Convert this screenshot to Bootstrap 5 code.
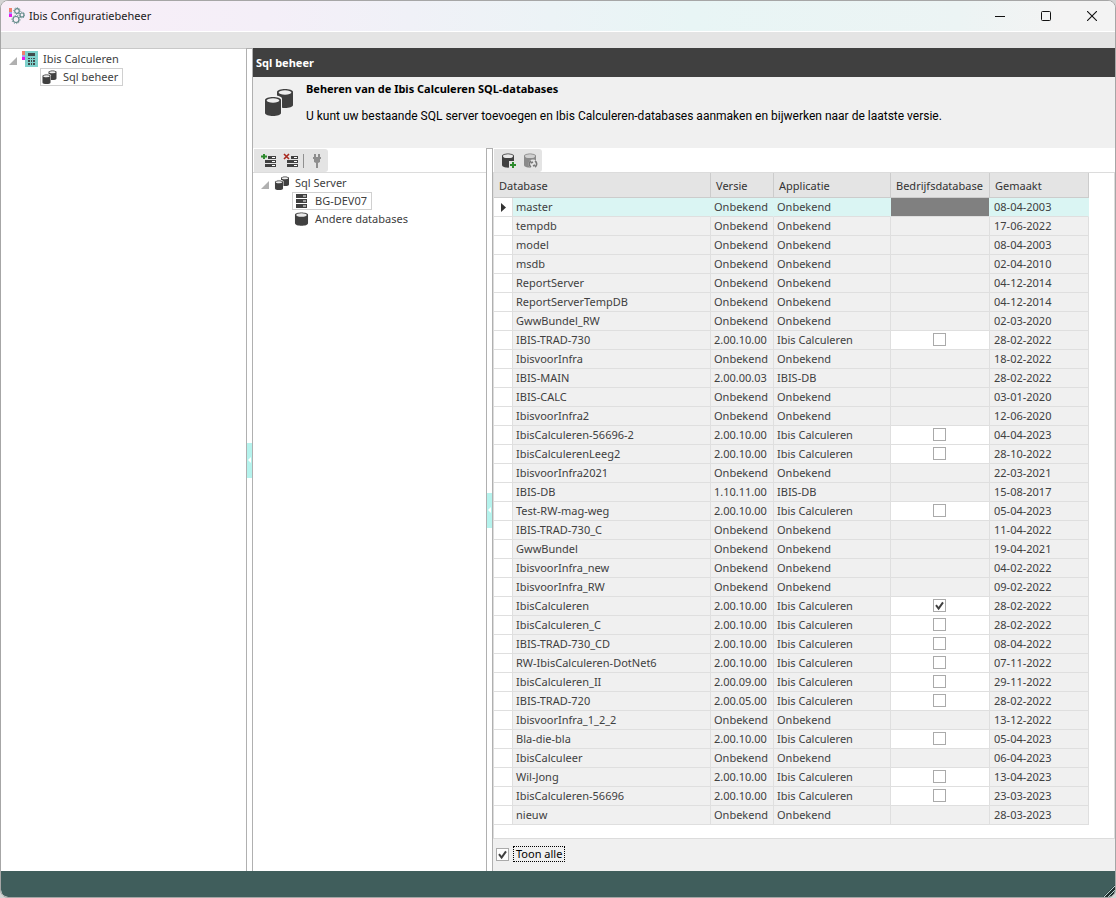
<!DOCTYPE html>
<html lang="nl">
<head>
<meta charset="utf-8">
<meta name="viewport" content="width=device-width, initial-scale=1">
<title>Ibis Configuratiebeheer</title>
<link href="https://cdn.jsdelivr.net/npm/bootstrap@5.3.0/dist/css/bootstrap.min.css" rel="stylesheet">
<style>
  body { font-family: "Noto Sans", "Open Sans", sans-serif; font-size: 11px; line-height: 18px; color: #404040; background: #d4d4d4; }
  .app-window { border: 1px solid #a6a6a6; border-radius: 8px; background: #fff; color: #404040; }
  .title-bar { height: 31px; padding: 0 0 1px 8px; color: #1a1a1a; background: linear-gradient(90deg, #f9eef8 0%, #f4eff8 24%, #e8f5f5 62%, #ecf4f4 86%, #f3f3f3 95%); border-bottom: 1px solid #fff; }
  .caption-btn { width: 46px; height: 28px; padding: 0; border: 0; background: none; color: #111; display: flex; align-items: center; justify-content: center; }
  .menu-strip { height: 16px; background: #e4e4e4; }
  .nav-pane { width: 245px; border-top: 1px solid #c8c8c8; }
  .server-pane { width: 233px; }
  .splitter { width: 7px; border: 1px solid #b0b0b0; border-width: 1px 1px 0; background: #fff; display: flex; flex-direction: column; justify-content: center; }
  .splitter-grip { height: 35px; background: #b5f3ed; display: flex; align-items: center; justify-content: center; }
  .pane-heading { height: 29px; line-height: 30px; padding-left: 3px; margin: 0; font-size: 11px; font-weight: 700; color: #fff; background: #404040; }
  .intro { height: 71px; padding: 3px 0 0 11px; background: #f0f0f0; color: #000; }
  .intro h2 { font-size: 11px; line-height: 18px; margin: 0 0 9px; font-weight: 700; }
  .intro p { font-family: Roboto, "Noto Sans", sans-serif; font-size: 12px; line-height: 18px; margin: 0; }
  .tool-row { height: 25px; padding: 1px 0 0 1px; border-bottom: 1px solid #dcdcdc; }
  .tool-strip { height: 23px; background: #e4e4e4; border-radius: 0 3px 3px 0; display: inline-flex; align-items: center; }
  .tool-strip button { width: 22px; height: 22px; padding: 0; border: 0; background: none; display: flex; align-items: center; justify-content: center; }
  .tool-sep { width: 1px; height: 14px; margin: 0 2px 0 1px; background: #909090; }
  .tree { list-style: none; margin: 0; padding: 0; }
  .nav-pane > .tree { padding-top: 1px; }
  .server-pane > .tree { padding-top: 1px; }
  .tree a { display: inline-flex; align-items: center; gap: 6px; height: 18px; padding: 0 4px 0 1px; border: 1px solid transparent; color: #404040; text-decoration: none; white-space: nowrap; }
  .tree a.chosen { border-color: #d0d0d0; }
  .tree-root { display: flex; align-items: center; height: 18px; }
  .tree-root svg:first-child { margin-right: 3px; }
  .tree-root a { gap: 4px; }
  .tree-root a svg:first-child { margin-right: 1px; }
  .tree-leaf { display: flex; height: 18px; padding-left: 39px; }
  .grid-area { border-right: 1px solid #dcdcdc; border-left: 1px solid #dcdcdc; border-bottom: 1px solid #dcdcdc; }
  .db-grid { table-layout: fixed; width: 595px; border-collapse: separate; border-spacing: 0; line-height: 18px; }
  .db-grid th { height: 25px; padding: 1px 5px 0; font-weight: 400; color: #333; background: #e4e4e4; border-right: 1px solid #ccc; border-bottom: 1px solid #ccc; white-space: nowrap; }
  .db-grid td { height: 19px; padding: 0 3px; background: #f0f0f0; border-right: 1px solid #dfdfdf; border-bottom: 1px solid #dfdfdf; white-space: nowrap; }
  .db-grid td:nth-child(6) { padding-left: 4px; }
  .db-grid td:first-child, .db-grid td.editable { background: #fff; }
  .db-grid td.editable { padding: 0 4px 1px 3px; }
  .db-grid tr.current td:not(:first-child) { background: #daf5f3; border-right-color: #daf5f3; }
  .db-grid tr.current td.blocked { background: #808080; border-right-color: #daf5f3; }
  .tick { appearance: none; display: block; width: 13px; height: 13px; margin: 0; border: 1px solid #aaa; border-radius: 0; background: #fff center / 11px 11px no-repeat; }
  .tick:checked { background-image: url("data:image/svg+xml,%3Csvg xmlns='http://www.w3.org/2000/svg' viewBox='0 0 11 11'%3E%3Cpath d='M2 5.2 4.6 8.5 9 2.4' fill='none' stroke='%23404040' stroke-width='2'/%3E%3C/svg%3E"); }
  .grid-footer { height: 32px; padding: 0 0 2px 3px; background: #f0f0f0; }
  .grid-footer label { margin-left: 4px; padding: 0 2px; line-height: 14px; border: 1px dotted #000; color: #000; }
  .status-strip { height: 26px; background: #405e5c; border-radius: 0 0 7px 7px; overflow: hidden; }
</style>
</head>
<body>
<svg class="d-none" xmlns="http://www.w3.org/2000/svg">
  <symbol id="cylinder" viewBox="0 0 14 15">
    <path d="M0 3C0-.4 14-.4 14 3v9c0 3.6-14 3.6-14 0z" fill="#404040"/>
    <ellipse cx="7" cy="3.2" rx="5.6" ry="1.9" fill="#e9e9e9"/>
  </symbol>
  <symbol id="cylinders" viewBox="0 0 30 30">
    <path d="M13 4C13 0 29 0 29 4v13c0 4-16 4-16 0z" fill="#404040"/>
    <ellipse cx="21" cy="4.500" rx="6.400" ry="2.200" fill="#efefef"/>
    <path d="M0 11c0-5 18-5 18 0v16H0z" fill="#f4f4f4"/>
    <path d="M1 12c0-4 16-4 16 0v13c0 4-16 4-16 0z" fill="#404040"/>
    <ellipse cx="9" cy="12.500" rx="6.400" ry="2.200" fill="#efefef"/>
  </symbol>
  <symbol id="rack" viewBox="0 0 11 14">
    <path d="M0 0h11v4H0zM0 5h11v4H0zM0 10h11v4H0z" fill="#404040"/>
    <path d="M7 2h3M7 7h3M7 12h3" stroke="#fff" stroke-width="1"/>
  </symbol>
  <symbol id="expanded" viewBox="0 0 8 8"><path d="M8 0v8H0z" fill="#b0b0b0"/></symbol>
</svg>

<div class="app-window d-flex flex-column min-vh-100 overflow-hidden">
  <header class="title-bar d-flex align-items-center">
    <svg width="16" height="18" viewBox="0 0 16 18">
      <path d="M0 1h3v4H0z" fill="#f0806c"/><path d="M0 5h3v2H0z" fill="#a9a0ee"/><path d="M0 7h3v3H0z" fill="#e815ee"/>
      <g fill="none" stroke="#5f8987" stroke-width="1.200">
        <circle cx="8" cy="4" r="2.300"/><circle cx="13" cy="8" r="2"/><circle cx="7" cy="12.500" r="3"/>
      </g>
      <g fill="none" stroke="#5f8987" stroke-width="1" stroke-dasharray="1 1.500">
        <circle cx="8" cy="4" r="3.300"/><circle cx="13" cy="8" r="2.900"/><circle cx="7" cy="12.500" r="4.100"/>
      </g>
    </svg>
    <span class="ms-1">Ibis Configuratiebeheer</span>
    <div class="ms-auto d-flex">
      <button class="caption-btn" type="button" aria-label="Minimaliseren"><svg width="10" height="10"><path d="M0 5.500h10" stroke="currentColor"/></svg></button>
      <button class="caption-btn" type="button" aria-label="Maximaliseren"><svg width="10" height="10"><rect x=".5" y=".5" width="9" height="9" rx="1" fill="none" stroke="currentColor"/></svg></button>
      <button class="caption-btn" type="button" aria-label="Sluiten"><svg width="10" height="10"><path d="m0 0 10 10M10 0 0 10" stroke="currentColor" stroke-width="1.100"/></svg></button>
    </div>
  </header>
  <div class="menu-strip"></div>

  <div class="d-flex flex-grow-1">
    <nav class="nav-pane flex-shrink-0">
      <ul class="tree">
        <li>
          <div class="tree-root ps-2">
            <svg class="mt-1" width="8" height="8"><use href="#expanded"/></svg>
            <a href="#"><svg width="16" height="16" viewBox="0 0 16 16">
              <path d="M3 0h13v16H3z" fill="#7fd1cc"/><path d="M0 0h3v4H0z" fill="#f0806c"/><path d="M0 4h3v2H0z" fill="#a9a0ee"/><path d="M0 6h3v3H0z" fill="#e815ee"/>
              <path d="M6 2h7v3H6zM6 7h2v1H6zM9 7h1v1H9zM11 7h2v1h-2zM6 9h2v2H6zM9 9h1v2H9zM11 9h2v2h-2zM6 12h2v2H6zM9 12h1v2H9zM11 12h2v2h-2z" fill="#404b4b"/>
            </svg>Ibis Calculeren</a>
          </div>
          <ul class="tree">
            <li class="tree-leaf"><a class="chosen" href="#"><svg width="15" height="15"><use href="#cylinders"/></svg>Sql beheer</a></li>
          </ul>
        </li>
      </ul>
    </nav>
    <div class="splitter flex-shrink-0"><div class="splitter-grip"><svg width="3" height="6"><path d="M3 0v6L0 3z" fill="#fff"/></svg></div></div>

    <main class="d-flex flex-column flex-grow-1">
      <h1 class="pane-heading">Sql beheer</h1>
      <section class="intro d-flex">
        <svg class="mt-2 me-2 flex-shrink-0" width="30" height="30"><use href="#cylinders"/></svg>
        <div class="ps-1 ms-0">
          <h2>Beheren van de Ibis Calculeren SQL-databases</h2>
          <p>U kunt uw bestaande SQL server toevoegen en Ibis Calculeren-databases aanmaken en bijwerken naar de laatste versie.</p>
        </div>
      </section>

      <div class="d-flex flex-grow-1">
        <section class="server-pane flex-shrink-0">
          <div class="tool-row">
            <div class="tool-strip ps-1">
              <button type="button" aria-label="Server toevoegen"><svg width="16" height="16" viewBox="0 0 16 16"><path d="M4 3h11v3H4zM4 7h11v3H4zM4 11h11v3H4z" fill="#404040"/><path d="M11 4.500h3M11 8.500h3M11 12.500h3" stroke="#fff"/><path d="M0 0h7v7H0z" fill="#e4e4e4"/><path d="M3 1v5M0 3.500h6" stroke="#2c8a2c" stroke-width="2"/></svg></button>
              <button type="button" aria-label="Server verwijderen"><svg width="16" height="16" viewBox="0 0 16 16"><path d="M4 3h11v3H4zM4 7h11v3H4zM4 11h11v3H4z" fill="#404040"/><path d="M11 4.500h3M11 8.500h3M11 12.500h3" stroke="#fff"/><path d="M0 0h8v7H0z" fill="#e4e4e4"/><path d="m1 1 5 5M6 1 1 6" stroke="#a8281e" stroke-width="1.600"/></svg></button>
              <span class="tool-sep"></span>
              <button type="button" aria-label="Verbinden" disabled><svg width="10" height="14" viewBox="0 0 10 14"><path d="M2 0h2v3h2V0h2v3h1v2H8v3L6 9v5H4V9L2 8V5H1V3h1z" fill="#8e8e8e"/></svg></button>
            </div>
          </div>
          <ul class="tree">
            <li>
              <div class="tree-root ps-2">
                <svg class="mt-1" width="8" height="8"><use href="#expanded"/></svg>
                <a href="#"><svg width="16" height="15"><use href="#cylinders"/></svg>Sql Server</a>
              </div>
              <ul class="tree">
                <li class="tree-leaf"><a class="chosen" href="#"><svg width="15" height="14"><use href="#rack"/></svg>BG-DEV07</a></li>
                <li class="tree-leaf"><a href="#"><svg width="15" height="14"><use href="#cylinder"/></svg>Andere databases</a></li>
              </ul>
            </li>
          </ul>
        </section>
        <div class="splitter flex-shrink-0"><div class="splitter-grip"><svg width="3" height="6"><path d="M3 0v6L0 3z" fill="#fff"/></svg></div></div>

        <section class="d-flex flex-column flex-grow-1">
          <div class="tool-row">
            <div class="tool-strip ps-1">
              <button type="button" aria-label="Database aanmaken"><svg width="16" height="16" viewBox="0 0 16 16"><path d="M1 3c0-3.500 12-3.500 12 0v9c0 3.500-12 3.500-12 0z" fill="#404040"/><ellipse cx="7" cy="3.200" rx="5" ry="1.900" fill="#e9e9e9"/><path d="M8 8h8v8H8z" fill="#e4e4e4"/><path d="M12 9v6M9 12h6" stroke="#2c8a2c" stroke-width="2"/></svg></button>
              <button type="button" aria-label="Database bijwerken" disabled><svg width="16" height="16" viewBox="0 0 16 16"><path d="M1 3c0-3.500 12-3.500 12 0v9c0 3.500-12 3.500-12 0z" fill="#8a8a8a"/><ellipse cx="7" cy="3.200" rx="5" ry="1.900" fill="#d0d0d0"/><circle cx="10" cy="11" r="4.500" fill="#e4e4e4"/><path d="M8 14a3.500 3.500 0 0 1 0-6M12 8a3.500 3.500 0 0 1 0 6M8 10l2-1M12 12l-2 1" fill="none" stroke="#777" stroke-width="1.600"/></svg></button>
            </div>
          </div>
          <div class="grid-area flex-grow-1">
            <table class="db-grid">
              <colgroup><col style="width:19px"><col style="width:198px"><col style="width:63px"><col style="width:117px"><col style="width:99px"><col style="width:99px"></colgroup>
              <thead>
                <tr><th colspan="2">Database</th><th>Versie</th><th>Applicatie</th><th>Bedrijfsdatabase</th><th>Gemaakt</th></tr>
              </thead>
              <tbody id="databases"></tbody>
            </table>
          </div>
          <div class="grid-footer d-flex align-items-center">
            <input class="tick" type="checkbox" id="showAll" checked>
            <label for="showAll">Toon alle</label>
          </div>
        </section>
      </div>
    </main>
  </div>

  <footer class="status-strip d-flex justify-content-end align-items-end">
    <svg width="12" height="12"><path d="M0 12 12 0v12z" fill="#20302f"/><path d="M1 12 12 1M5 12l7-7M9 12l3-3" stroke="#b7d0ce"/></svg>
  </footer>
</div>

<script>
  // name | version | application | date | company database (0 or 1, empty when not applicable)
  const rows = `master|Onbekend|Onbekend|08-04-2003|
tempdb|Onbekend|Onbekend|17-06-2022|
model|Onbekend|Onbekend|08-04-2003|
msdb|Onbekend|Onbekend|02-04-2010|
ReportServer|Onbekend|Onbekend|04-12-2014|
ReportServerTempDB|Onbekend|Onbekend|04-12-2014|
GwwBundel_RW|Onbekend|Onbekend|02-03-2020|
IBIS-TRAD-730|2.00.10.00|Ibis Calculeren|28-02-2022|0
IbisvoorInfra|Onbekend|Onbekend|18-02-2022|
IBIS-MAIN|2.00.00.03|IBIS-DB|28-02-2022|
IBIS-CALC|Onbekend|Onbekend|03-01-2020|
IbisvoorInfra2|Onbekend|Onbekend|12-06-2020|
IbisCalculeren-56696-2|2.00.10.00|Ibis Calculeren|04-04-2023|0
IbisCalculerenLeeg2|2.00.10.00|Ibis Calculeren|28-10-2022|0
IbisvoorInfra2021|Onbekend|Onbekend|22-03-2021|
IBIS-DB|1.10.11.00|IBIS-DB|15-08-2017|
Test-RW-mag-weg|2.00.10.00|Ibis Calculeren|05-04-2023|0
IBIS-TRAD-730_C|Onbekend|Onbekend|11-04-2022|
GwwBundel|Onbekend|Onbekend|19-04-2021|
IbisvoorInfra_new|Onbekend|Onbekend|04-02-2022|
IbisvoorInfra_RW|Onbekend|Onbekend|09-02-2022|
IbisCalculeren|2.00.10.00|Ibis Calculeren|28-02-2022|1
IbisCalculeren_C|2.00.10.00|Ibis Calculeren|28-02-2022|0
IBIS-TRAD-730_CD|2.00.10.00|Ibis Calculeren|08-04-2022|0
RW-IbisCalculeren-DotNet6|2.00.10.00|Ibis Calculeren|07-11-2022|0
IbisCalculeren_II|2.00.09.00|Ibis Calculeren|29-11-2022|0
IBIS-TRAD-720|2.00.05.00|Ibis Calculeren|28-02-2022|0
IbisvoorInfra_1_2_2|Onbekend|Onbekend|13-12-2022|
Bla-die-bla|2.00.10.00|Ibis Calculeren|05-04-2023|0
IbisCalculeer|Onbekend|Onbekend|06-04-2023|
Wil-Jong|2.00.10.00|Ibis Calculeren|13-04-2023|0
IbisCalculeren-56696|2.00.10.00|Ibis Calculeren|23-03-2023|0
nieuw|Onbekend|Onbekend|28-03-2023|`.split("\n").map(line => line.split("|"));

  document.getElementById("databases").innerHTML = rows.map(([name, version, app, made, company], i) => {
    const marker = i === 0 ? '<svg class="d-block ms-1" width="6" height="9"><path d="M0 0l5 4.500L0 9z" fill="#333"/></svg>' : "";
    const box = company === "" ? "" : `<input class="tick mx-auto" type="checkbox" aria-label="Bedrijfsdatabase ${name}"${company === "1" ? " checked" : ""}>`;
    const kind = company !== "" ? "editable" : i === 0 ? "blocked" : "";
    return `<tr${i === 0 ? ' class="current"' : ""}><td>${marker}</td><td>${name}</td><td>${version}</td><td>${app}</td><td class="${kind}">${box}</td><td>${made}</td></tr>`;
  }).join("");
</script>
<script src="https://cdn.jsdelivr.net/npm/bootstrap@5.3.0/dist/js/bootstrap.bundle.min.js"></script>
</body>
</html>
